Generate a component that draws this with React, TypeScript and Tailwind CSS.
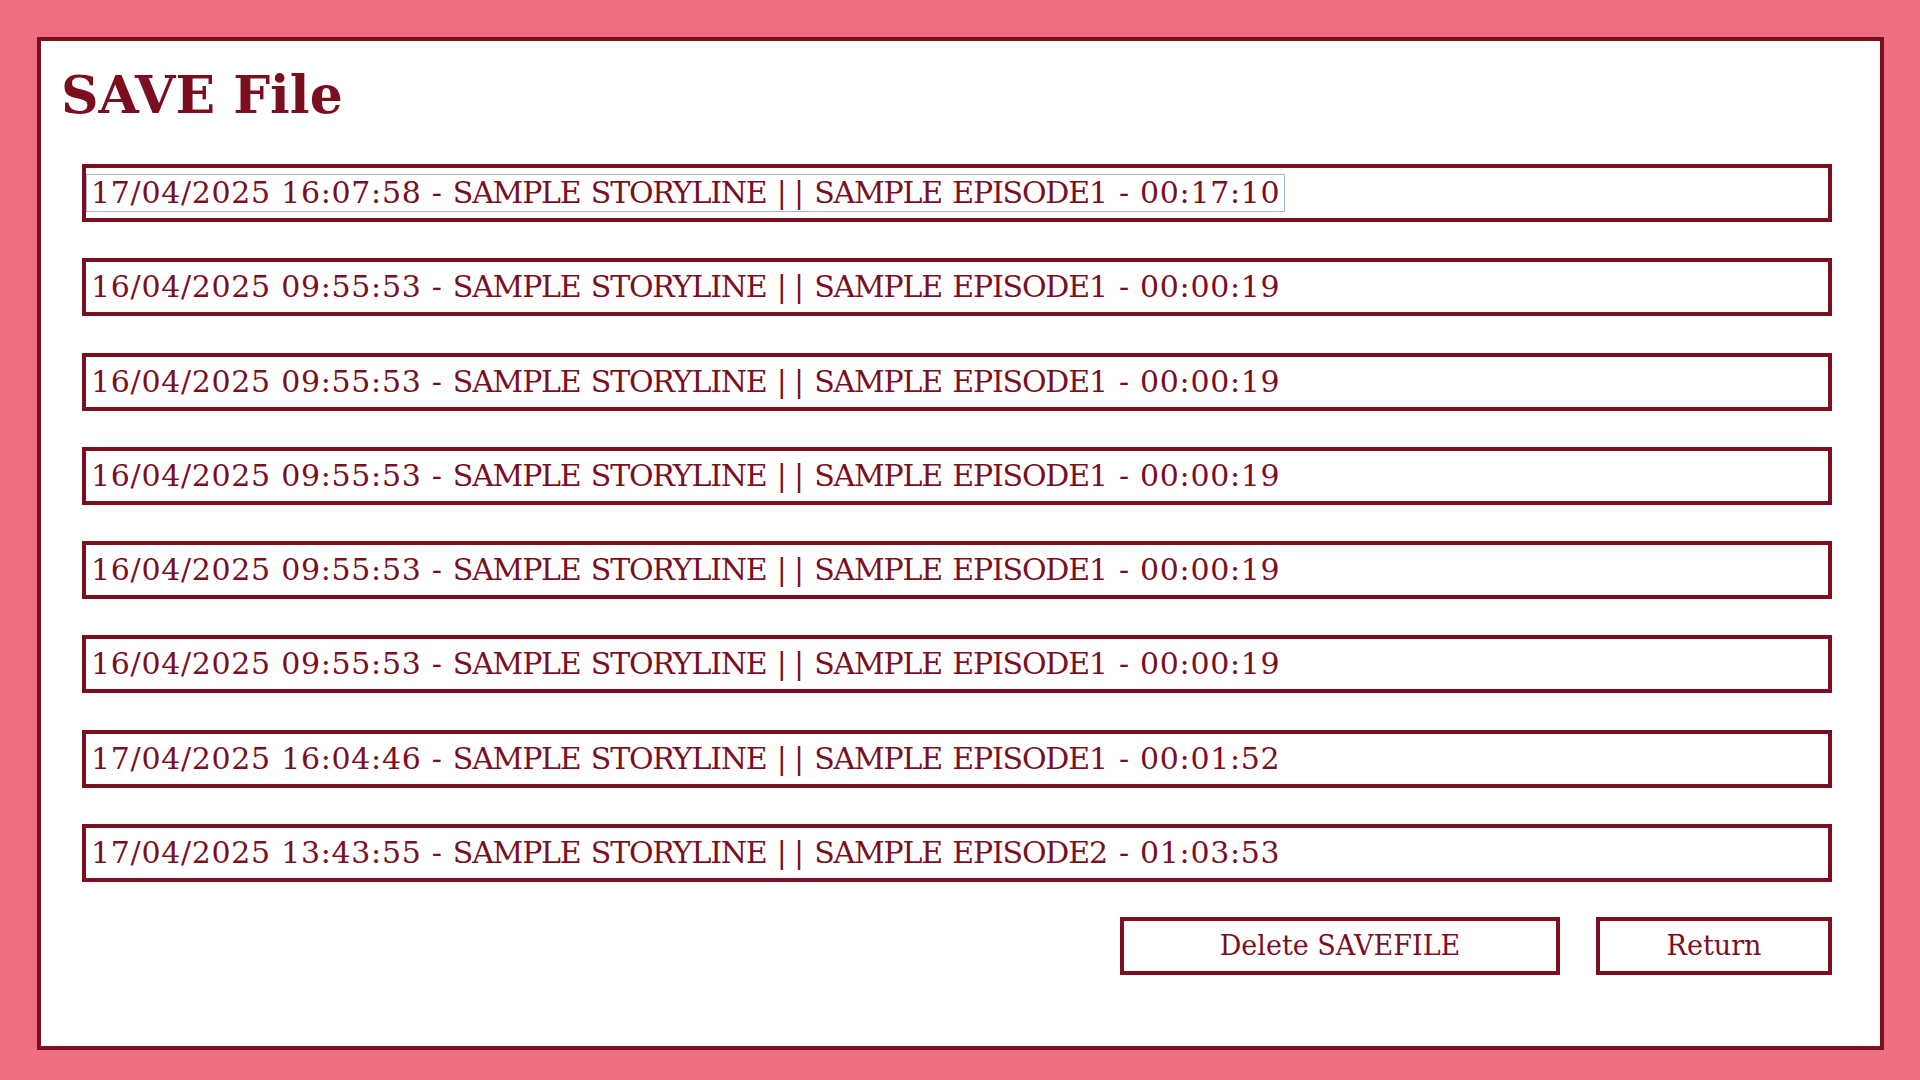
import React from "react";

const rows = [
  "17/04/2025 16:07:58 - SAMPLE STORYLINE || SAMPLE EPISODE1 - 00:17:10",
  "16/04/2025 09:55:53 - SAMPLE STORYLINE || SAMPLE EPISODE1 - 00:00:19",
  "16/04/2025 09:55:53 - SAMPLE STORYLINE || SAMPLE EPISODE1 - 00:00:19",
  "16/04/2025 09:55:53 - SAMPLE STORYLINE || SAMPLE EPISODE1 - 00:00:19",
  "16/04/2025 09:55:53 - SAMPLE STORYLINE || SAMPLE EPISODE1 - 00:00:19",
  "16/04/2025 09:55:53 - SAMPLE STORYLINE || SAMPLE EPISODE1 - 00:00:19",
  "17/04/2025 16:04:46 - SAMPLE STORYLINE || SAMPLE EPISODE1 - 00:01:52",
  "17/04/2025 13:43:55 - SAMPLE STORYLINE || SAMPLE EPISODE2 - 01:03:53",
];

function RowText({ text }: { text: string }) {
  const parts = text.split(/([A-Z]+|\|\|)/).filter((p) => p.length > 0);
  return (
    <>
      {parts.map((p, i) => {
        if (p === "||")
          return (
            <span key={i}>
              <span className="tracking-[7px]">|</span>|
            </span>
          );
        if (/^[A-Z]+$/.test(p))
          return (
            <span key={i} className="tracking-[-1.2px]">
              {p}
            </span>
          );
        return (
          <span key={i} className="tracking-[0.7px]">
            {p}
          </span>
        );
      })}
    </>
  );
}

export default function App() {
  return (
    <div
      className="w-[1920px] h-[1080px] bg-[#ee6f82] pt-[37px] pl-[37px] pr-[36px] pb-[30px] text-[#7b0f1f]"
      style={{ fontFamily: '"DejaVu Serif", serif' }}
    >
      <div className="w-full h-full bg-white border-4 border-[#7b0f1f] flex flex-col">
        <h1 className="mt-[28px] ml-[20px] text-[52px] font-bold leading-none">SAVE File</h1>
        <div className="mt-[43px] ml-[41px] mr-[48px] flex flex-col gap-[36.3px]">
          {rows.map((r, i) => (
            <div
              key={i}
              className="h-[58px] border-4 border-[#7b0f1f] flex items-center"
            >
              <span
                className={
                  "px-[4px] leading-[36px] text-[30px] whitespace-pre border " +
                  (i === 0 ? "border-[#a5b8d3]" : "border-transparent")
                }
              >
                <RowText text={r} />
              </span>
            </div>
          ))}
        </div>
        <div className="mt-[35px] mr-[48px] flex justify-end gap-[36px]">
          <button className="w-[440px] h-[58px] border-4 border-[#7b0f1f] bg-white text-[27px] text-[#7b0f1f] flex items-center justify-center">
            Delete SAVEFILE
          </button>
          <button className="w-[236px] h-[58px] border-4 border-[#7b0f1f] bg-white text-[27px] text-[#7b0f1f] flex items-center justify-center">
            Return
          </button>
        </div>
      </div>
    </div>
  );
}
